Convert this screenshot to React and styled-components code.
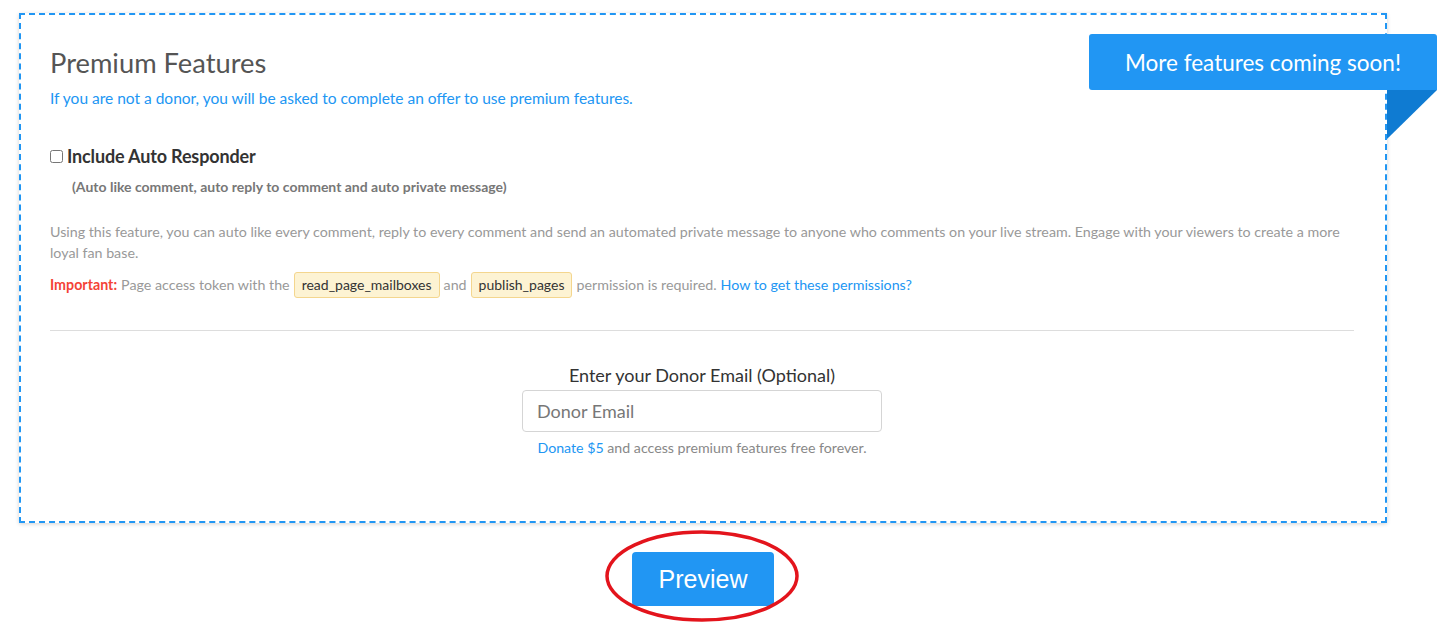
import React from "react";
import styled, { createGlobalStyle } from "styled-components";

const Global = createGlobalStyle`
  html, body { margin: 0; padding: 0; background: #fff; }
  body { font-family: Lato, "Open Sans", "Liberation Sans", sans-serif; }
  * { box-sizing: border-box; }
`;

const Page = styled.div`
  width: 1447px;
  height: 625px;
  padding: 13px 0 0 19px;
  overflow: hidden;
`;

const Panel = styled.section`
  position: relative;
  width: 1368px;
  height: 510px;
  border: 2px dashed #2196f3;
  box-shadow: 0 1px 4px rgba(0, 0, 0, 0.18);
  padding: 32px 31px 0 29px;
  background: #fff;
`;

const Ribbon = styled.div`
  position: absolute;
  top: 19px;
  right: -52px;
  width: 348px;
  height: 56px;
  background: #2196f3;
  color: #fff;
  font-size: 22.5px;
  border-radius: 3px 3px 0 3px;
  display: flex;
  align-items: center;
  justify-content: center;
  &::after {
    content: "";
    position: absolute;
    right: 0;
    top: 56px;
    border-top: 49px solid #0f7bd2;
    border-right: 50px solid transparent;
  }
`;

const Title = styled.h2`
  margin: 0;
  font-size: 27.3px;
  font-weight: 400;
  color: #555;
  line-height: 32px;
`;

const Lead = styled.p`
  margin: 9px 0 0;
  font-size: 15.5px;
  color: #2196f3;
  line-height: 20px;
`;

const CheckRow = styled.label`
  display: flex;
  align-items: center;
  margin-top: 36px;
  font-size: 18px;
  font-weight: 700;
  color: #333;
  line-height: 24px;
  letter-spacing: -0.15px;
  input {
    margin: 0 4px 0 0;
    width: 13px;
    height: 13px;
  }
`;

const SubNote = styled.div`
  margin: 9px 0 0 22px;
  font-size: 14px;
  font-weight: 700;
  color: #777;
  line-height: 20px;
`;

const Desc = styled.p`
  margin: 24px 0 0;
  max-width: 1300px;
  font-size: 14.25px;
  color: #999;
  line-height: 21px;
`;

const Note = styled.p`
  margin: 9px 0 0;
  font-size: 14.25px;
  color: #999;
  line-height: 26px;
  display: flex;
  align-items: center;
  gap: 4px;
`;

const Strong = styled.span`
  color: #f44336;
  font-weight: 700;
`;

const Code = styled.span`
  display: inline-block;
  background: #fdf3d3;
  border: 1px solid #f4d68e;
  border-radius: 3px;
  color: #333;
  padding: 0 7px;
  line-height: 24px;
  font-size: 14px;
`;

const Link = styled.a`
  color: #2196f3;
  text-decoration: none;
`;

const Rule = styled.hr`
  margin: 32px 0 0;
  border: 0;
  border-top: 1px solid #ddd;
`;

const DonorBlock = styled.div`
  display: flex;
  flex-direction: column;
  align-items: center;
  margin-top: 33px;
`;

const DonorLabel = styled.div`
  font-size: 18px;
  color: #333;
  line-height: 22px;
`;

const Input = styled.input`
  margin-top: 4px;
  width: 360px;
  height: 42px;
  border: 1px solid #d5d5d5;
  border-radius: 4px;
  padding: 0 14px;
  font-family: Lato, sans-serif;
  font-size: 18px;
  color: #333;
  &::placeholder { color: #777; }
`;

const Help = styled.div`
  margin-top: 7px;
  font-size: 14.2px;
  color: #888;
  line-height: 18px;
`;

const Actions = styled.div`
  position: relative;
  display: flex;
  justify-content: center;
  width: 1368px;
  padding-top: 29px;
`;

const PreviewButton = styled.button`
  width: 142px;
  height: 54px;
  border: 0;
  border-radius: 4px;
  background: #2196f3;
  color: #fff;
  font-family: "Liberation Sans", Arial, sans-serif;
  font-size: 25px;
  cursor: pointer;
`;

const Circle = styled.svg`
  position: absolute;
  left: 583px;
  top: 6px;
  pointer-events: none;
`;

export default function App() {
  return (
    <Page>
      <Global />
      <Panel>
        <Ribbon>More features coming soon!</Ribbon>
        <Title>Premium Features</Title>
        <Lead>If you are not a donor, you will be asked to complete an offer to use premium features.</Lead>
        <CheckRow>
          <input type="checkbox" />
          Include Auto Responder
        </CheckRow>
        <SubNote>(Auto like comment, auto reply to comment and auto private message)</SubNote>
        <Desc>
          Using this feature, you can auto like every comment, reply to every comment and send an automated private
          message to anyone who comments on your live stream. Engage with your viewers to create a more loyal fan base.
        </Desc>
        <Note>
          <Strong>Important:</Strong> Page access token with the <Code>read_page_mailboxes</Code> and{" "}
          <Code>publish_pages</Code> permission is required. <Link href="#">How to get these permissions?</Link>
        </Note>
        <Rule />
        <DonorBlock>
          <DonorLabel>Enter your Donor Email (Optional)</DonorLabel>
          <Input placeholder="Donor Email" />
          <Help>
            <Link href="#">Donate $5</Link> and access premium features free forever.
          </Help>
        </DonorBlock>
      </Panel>
      <Actions>
        <PreviewButton>Preview</PreviewButton>
        <Circle width="200" height="96" viewBox="0 0 200 96">
          <ellipse cx="100" cy="47" rx="95" ry="44" fill="none" stroke="#e3141c" strokeWidth="3.5" />
        </Circle>
      </Actions>
    </Page>
  );
}
